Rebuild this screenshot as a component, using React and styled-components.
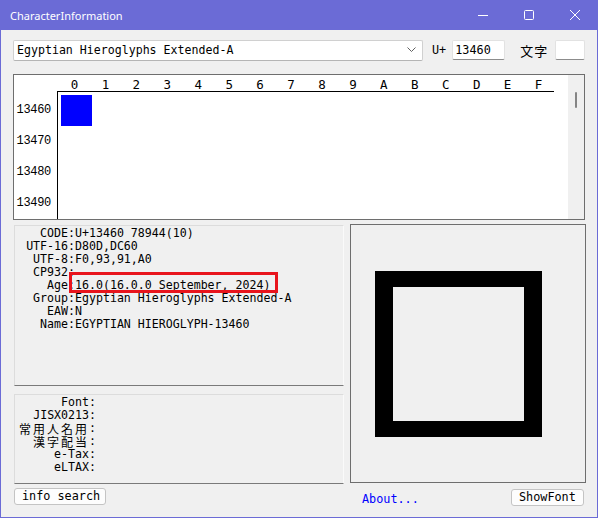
import React from 'react';
import styled, { createGlobalStyle } from 'styled-components';

const Global = createGlobalStyle`
  html, body { margin: 0; padding: 0; background: #6b6bd6; }
  body { width: 598px; height: 518px; overflow: hidden; }
`;

const mono = `"DejaVu Sans Mono", "Liberation Mono", "Noto Sans CJK JP", monospace`;

const Window = styled.div`
  width: 598px;
  height: 518px;
  box-sizing: border-box;
  display: flex;
  flex-direction: column;
  background: #f0f0f0;
  border: 1px solid #6b6bd6;
  border-top: none;
  font-family: ${mono};
  font-size: 11.6px;
  color: #000;
`;

const TitleBar = styled.div`
  height: 30px;
  margin: 0 -1px;
  background: #6b6bd6;
  display: flex;
  align-items: center;
  color: #fff;
  font-family: "Noto Sans", "Open Sans", sans-serif;
  font-size: 11px;
  padding-left: 10px;
`;

const Title = styled.div`
  flex: 1;
  padding-top: 1px;
`;

const Ctrl = styled.div`
  width: 46px;
  height: 30px;
  display: flex;
  align-items: center;
  justify-content: center;
`;

const Body = styled.div`
  flex: 1;
  padding: 9px 11px 0 12px;
  display: flex;
  flex-direction: column;
`;

const TopRow = styled.div`
  display: flex;
  align-items: center;
  height: 22px;
`;

const Select = styled.div`
  width: 410px;
  height: 21px;
  box-sizing: border-box;
  background: #fff;
  border: 1px solid #d0d0d0;
  border-bottom-color: #b5b5b5;
  border-radius: 2px;
  display: flex;
  align-items: center;
  padding: 0 6px 0 3px;
  font-size: 11.6px;
`;

const SelectText = styled.span`
  flex: 1;
`;

const Label = styled.span`
  margin: ${p => p.$m || '0'};
  font-size: ${p => p.$cjk ? '13px' : '11.8px'};
  font-family: ${p => p.$cjk ? '"Noto Sans CJK JP", sans-serif' : mono};
  letter-spacing: ${p => p.$cjk ? '1px' : '0'};
`;

const Input = styled.div`
  width: ${p => p.$w}px;
  height: 20px;
  box-sizing: border-box;
  background: #fff;
  border: 1px solid #e2e2e2;
  border-bottom-color: #8c8c8c;
  border-radius: 2px;
  padding: 1px 2px;
  font-size: 11.8px;
  display: flex;
  align-items: center;
`;

const GridPanel = styled.div`
  margin-top: 13px;
  width: 572px;
  height: 146px;
  box-sizing: border-box;
  border: 1px solid #6e6e6e;
  display: flex;
  background: #fff;
`;

const GridArea = styled.div`
  flex: 1;
  display: grid;
  grid-template-columns: 44px 496px;
  grid-template-rows: 17px 1fr;
  overflow: hidden;
`;

const Corner = styled.div``;

const HeadRow = styled.div`
  display: flex;
  border-bottom: 1px solid #000;
  padding-left: 2px;
  margin-left: -1px;
`;

const HeadCell = styled.div`
  width: 31px;
  text-align: center;
  font-size: 12.5px;
  line-height: 19px;
  height: 17px;
`;

const RowLabels = styled.div`
  display: flex;
  flex-direction: column;
  padding-top: 3px;
  border-right: 1px solid #000;
`;

const RowLabel = styled.div`
  height: 31px;
  line-height: 31px;
  text-align: right;
  padding-right: 6px;
  font-size: 12px;
  letter-spacing: -0.3px;
  font-family: "Liberation Mono", monospace;
`;

const Cells = styled.div`
  display: grid;
  grid-template-columns: repeat(16, 31px);
  grid-auto-rows: 31px;
  padding: 3px 0 0 3px;
`;

const Cell = styled.div`
  background: ${p => p.$on ? '#0000ff' : 'transparent'};
`;

const ScrollTrack = styled.div`
  width: 16px;
  background: #f0f0f0;
  display: flex;
  justify-content: center;
  padding-top: 17px;
`;

const Thumb = styled.div`
  width: 2px;
  height: 16px;
  background: #858585;
  border-radius: 1px;
`;

const Lower = styled.div`
  display: flex;
  margin-top: 4px;
`;

const LeftCol = styled.div`
  width: 330px;
  margin-left: 1px;
  display: flex;
  flex-direction: column;
`;

const RightCol = styled.div`
  width: 236px;
  margin-left: 6px;
  display: flex;
  flex-direction: column;
`;

const InfoPanel = styled.div`
  height: ${p => p.$h}px;
  margin-top: ${p => p.$mt || 0}px;
  box-sizing: border-box;
  border: 1px solid #dcdcdc;
  border-right-color: #fafafa;
  border-bottom-color: #7a7a7a;
  padding-top: 1px;
  display: grid;
  grid-template-columns: ${p => p.$lw}px auto;
  grid-auto-rows: 13px;
  align-content: start;
  line-height: 13px;
`;

const Key = styled.div`
  text-align: right;
  white-space: nowrap;
  height: 13px;
`;

const Cjk = styled.span`
  display: inline-block;
  vertical-align: top;
  height: 13px;
  line-height: 13px;
  font-family: "Noto Sans CJK JP", sans-serif;
  font-size: 12px;
  letter-spacing: 2px;
`;

const Val = styled.div`
  white-space: nowrap;
`;

const Marked = styled.span`
  position: relative;
  &::after {
    content: '';
    position: absolute;
    left: -6px;
    top: -6px;
    width: 209px;
    height: 21px;
    box-sizing: border-box;
    border: 3px solid #e8141c;
  }
`;

const Button = styled.div`
  height: 17px;
  width: ${p => p.$w}px;
  box-sizing: border-box;
  border: 1px solid #c4c4c4;
  border-radius: 3px;
  background: #fdfdfd;
  padding-left: 7px;
  line-height: 15px;
  font-size: 11.8px;
  margin-top: ${p => p.$mt || 0}px;
  margin-right: ${p => p.$mr || 0}px;
`;

const Preview = styled.div`
  height: 259px;
  box-sizing: border-box;
  border: 1px solid #6e6e6e;
  padding: 46px 0 0 24px;
`;

const Tofu = styled.div`
  width: 131px;
  height: 134px;
  border-style: solid;
  border-color: #000;
  border-width: 16px 18px;
  background: #f0f0f0;
`;

const BottomRow = styled.div`
  display: flex;
  justify-content: space-between;
  align-items: flex-start;
  margin-top: 6px;
`;

const About = styled.div`
  color: #0000ff;
  margin: 3px 0 0 12px;
  font-size: 11.8px;
`;

const cols = ['0','1','2','3','4','5','6','7','8','9','A','B','C','D','E','F'];
const rows = ['13460', '13470', '13480', '13490'];

const basic = [
  ['CODE', 'U+13460 78944(10)'],
  ['UTF-16', 'D80D,DC60'],
  ['UTF-8', 'F0,93,91,A0'],
  ['CP932', ''],
  ['Age', '16.0(16.0.0 September, 2024)', true],
  ['Group', 'Egyptian Hieroglyphs Extended-A'],
  ['EAW', 'N'],
  ['Name', 'EGYPTIAN HIEROGLYPH-13460'],
];

const extra = [
  ['Font'],
  ['JISX0213'],
  ['常用人名用', true],
  ['漢字配当', true],
  ['e-Tax'],
  ['eLTAX'],
];

export default function App() {
  return (
    <>
      <Global />
      <Window>
        <TitleBar>
          <Title>CharacterInformation</Title>
          <Ctrl>
            <svg width="12" height="12" viewBox="0 0 12 12"><line x1="1" y1="6.5" x2="11" y2="6.5" stroke="#fff" strokeWidth="1" /></svg>
          </Ctrl>
          <Ctrl>
            <svg width="12" height="12" viewBox="0 0 12 12"><rect x="1.5" y="1.5" width="9" height="9" rx="1" fill="none" stroke="#fff" strokeWidth="1" /></svg>
          </Ctrl>
          <Ctrl>
            <svg width="12" height="12" viewBox="0 0 12 12"><path d="M1 1 L11 11 M11 1 L1 11" stroke="#fff" strokeWidth="1" /></svg>
          </Ctrl>
        </TitleBar>
        <Body>
          <TopRow>
            <Select>
              <SelectText>Egyptian Hieroglyphs Extended-A</SelectText>
              <svg width="9" height="6" viewBox="0 0 9 6"><path d="M0.5 0.5 L4.5 4.5 L8.5 0.5" fill="none" stroke="#606060" strokeWidth="1" /></svg>
            </Select>
            <Label $m="0 6px 0 9px">U+</Label>
            <Input $w={53}>13460</Input>
            <Label $cjk $m="0 7px 0 15px">文字</Label>
            <Input $w={30} />
          </TopRow>
          <GridPanel>
            <GridArea>
              <Corner />
              <HeadRow>
                {cols.map(c => <HeadCell key={c}>{c}</HeadCell>)}
              </HeadRow>
              <RowLabels>
                {rows.map(r => <RowLabel key={r}>{r}</RowLabel>)}
              </RowLabels>
              <Cells>
                {Array.from({ length: 64 }).map((_, i) => <Cell key={i} $on={i === 0} />)}
              </Cells>
            </GridArea>
            <ScrollTrack><Thumb /></ScrollTrack>
          </GridPanel>
          <Lower>
            <LeftCol>
              <InfoPanel $h={161} $lw={60} $mt={1}>
                {basic.map(([k, v, mark]) => (
                  <React.Fragment key={k}>
                    <Key>{k}:</Key>
                    <Val>{mark ? <Marked>{v}</Marked> : v}</Val>
                  </React.Fragment>
                ))}
              </InfoPanel>
              <InfoPanel $h={90} $lw={81} $mt={8}>
                {extra.map(([k, cjk]) => (
                  <React.Fragment key={k}>
                    <Key>{cjk ? <Cjk>{k}</Cjk> : k}:</Key>
                    <Val />
                  </React.Fragment>
                ))}
              </InfoPanel>
              <Button $w={92} $mt={4}>info search</Button>
            </LeftCol>
            <RightCol>
              <Preview>
                <Tofu />
              </Preview>
              <BottomRow>
                <About>About...</About>
                <Button $w={73} $mr={2}>ShowFont</Button>
              </BottomRow>
            </RightCol>
          </Lower>
        </Body>
      </Window>
    </>
  );
}
